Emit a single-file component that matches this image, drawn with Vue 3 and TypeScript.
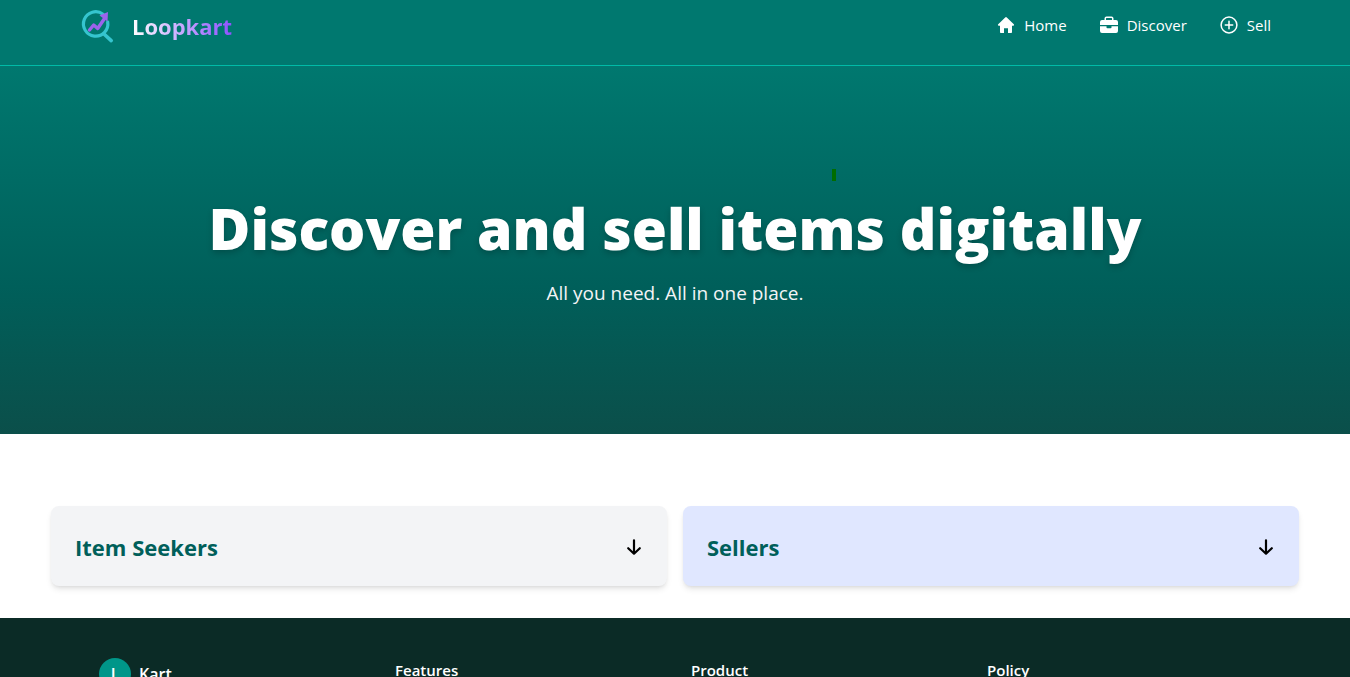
<script setup lang="ts">
interface Panel {
  id: string
  title: string
}

const panels: Panel[] = [
  { id: 'seekers', title: 'Item Seekers' },
  { id: 'sellers', title: 'Sellers' },
]

const footerColumns: string[] = ['Features', 'Product', 'Policy']
</script>

<template>
  <div class="page">
    <header class="header">
      <div class="header-inner">
        <a class="brand" href="#">
          <svg class="brand-mark" viewBox="0 0 36 36" fill="none" aria-hidden="true">
            <path d="M24 6.200A12.200 12.200 0 1 0 28.700 14" stroke="#35c5cf" stroke-width="3.200" stroke-linecap="round" />
            <path d="M25 26 32.200 32.600" stroke="#35c5cf" stroke-width="3.600" stroke-linecap="round" />
            <path d="M10.500 22 14.700 17 18.700 20.500 25.500 10.500" stroke="#9b63ec" stroke-width="3.400" stroke-linejoin="round" stroke-linecap="round" />
            <path d="M20.500 7.500 29 4 28.500 13.500Z" fill="#9b63ec" />
          </svg>
          <span class="brand-name">Loopkart</span>
        </a>
        <nav class="nav" aria-label="Main">
          <a href="#">
            <svg viewBox="0 0 20 20" fill="currentColor" aria-hidden="true">
              <path d="M9.200 2.400a1.200 1.200 0 0 1 1.600 0l7 6.800c.6.6.2 1.500-.6 1.500H16v6.200c0 .7-.4 1.100-1.100 1.100H12v-4.700H8V18H5.100c-.7 0-1.100-.4-1.100-1.100v-6.200H2.800c-.8 0-1.200-.9-.6-1.500z" />
            </svg>
            <span>Home</span>
          </a>
          <a href="#">
            <svg viewBox="0 0 20 20" fill="currentColor" aria-hidden="true">
              <path fill-rule="evenodd" d="M5.500 5V3.500A2 2 0 0 1 7.500 1.500h5a2 2 0 0 1 2 2V5H17a2 2 0 0 1 2 2v3H1V7a2 2 0 0 1 2-2zm1.500 0h6V3.500a.5.5 0 0 0-.5-.5h-5a.5.5 0 0 0-.5.5z" />
              <path d="M1 11.300h6.500v1.200c0 .5.300.8.800.8h3.400c.5 0 .8-.3.800-.8v-1.200H19V16a2 2 0 0 1-2 2H3a2 2 0 0 1-2-2z" />
            </svg>
            <span>Discover</span>
          </a>
          <a href="#">
            <svg viewBox="0 0 20 20" fill="none" stroke="currentColor" stroke-width="1.500" stroke-linecap="round" aria-hidden="true">
              <circle cx="10" cy="10" r="7.900" />
              <path d="M10 6.300v7.400M6.300 10h7.400" />
            </svg>
            <span>Sell</span>
          </a>
        </nav>
      </div>
    </header>

    <main>
      <section class="hero">
        <span class="caret" aria-hidden="true"></span>
        <h1>Discover and sell items digitally</h1>
        <p>All you need. All in one place.</p>
      </section>

      <section class="panels">
        <button v-for="panel in panels" :key="panel.id" type="button" class="panel" :class="panel.id">
          <span class="panel-title">{{ panel.title }}</span>
          <svg viewBox="0 0 20 20" fill="none" stroke="#000" stroke-width="2.200" stroke-linecap="round" stroke-linejoin="round" aria-hidden="true">
            <path d="M10 3.300v13.200M4.200 11.200 10 16.700l5.800-5.500" />
          </svg>
        </button>
      </section>
    </main>

    <footer class="footer">
      <div class="footer-inner">
        <div class="footer-brand">
          <span class="badge">L</span>
          <span>Kart</span>
        </div>
        <h2 v-for="column in footerColumns" :key="column">{{ column }}</h2>
      </div>
    </footer>
  </div>
</template>

<style>
body {
  margin: 0;
  background: #fff;
}
</style>

<style scoped>
.page {
  font-family: "Segoe UI", "Open Sans", "Noto Sans", sans-serif;
  font-size: 16px;
  line-height: 24px;
  color: #fff;
}

.header {
  background: #00786f;
  border-bottom: 1px solid #00bba7;
}

.header-inner {
  box-sizing: border-box;
  max-width: 1192px;
  margin: 0 auto;
  padding: 8px 0 21px;
  display: flex;
  align-items: center;
  justify-content: space-between;
}

.brand {
  display: flex;
  align-items: center;
  gap: 17px;
  text-decoration: none;
}

.brand-mark {
  width: 36px;
  height: 36px;
}

.brand-name {
  font-size: 22px;
  line-height: 32px;
  font-weight: 700;
  color: transparent;
  background: linear-gradient(to right, #fff, #8e51ff);
  background-clip: text;
}

.nav {
  display: flex;
  gap: 32px;
  padding-bottom: 2px;
}

.nav a {
  display: flex;
  align-items: center;
  gap: 8px;
  color: #fff;
  font-size: 15px;
  text-decoration: none;
}

.nav svg {
  width: 20px;
  height: 20px;
}

.hero {
  position: relative;
  display: flex;
  flex-direction: column;
  align-items: center;
  padding: 132px 16px 127px;
  text-align: center;
  background: linear-gradient(to bottom, #00786f, #005f5a 60%, #0b4f4a);
}

.caret {
  position: absolute;
  top: 103px;
  left: calc(50% + 157px);
  width: 4px;
  height: 12px;
  background: #006d00;
}

.hero h1 {
  margin: 0;
  font-size: 57px;
  line-height: 60px;
  font-weight: 800;
  text-shadow: 0 3px 6px rgb(0 0 0 / 0.2);
}

.hero p {
  margin: 21px 0 0;
  font-size: 19px;
  line-height: 28px;
  color: #f3f4f6;
}

.panels {
  box-sizing: border-box;
  max-width: 1280px;
  margin: 0 auto;
  padding: 72px 16px 32px;
  display: grid;
  grid-template-columns: 1fr 1fr;
  gap: 16px;
}

.panel {
  display: flex;
  align-items: center;
  justify-content: space-between;
  padding: 25px 23px 23px 24px;
  border: 0;
  border-radius: 8px;
  font-family: inherit;
  text-align: left;
  cursor: pointer;
  box-shadow: 0 4px 6px -1px rgb(0 0 0 / 0.1), 0 2px 4px -2px rgb(0 0 0 / 0.1);
}

.seekers {
  background: #f3f4f6;
}

.sellers {
  background: #e0e7ff;
}

.panel-title {
  font-size: 22px;
  line-height: 32px;
  font-weight: 700;
  color: #005f5a;
}

.panel svg {
  width: 20px;
  height: 20px;
}

.footer {
  background: #0b2b26;
}

.footer-inner {
  max-width: 1152px;
  margin: 0 auto;
  padding: 40px 16px;
  display: grid;
  grid-template-columns: repeat(4, 1fr);
  gap: 32px;
}

.footer-brand {
  display: flex;
  align-items: center;
  gap: 8px;
  font-weight: 600;
}

.badge {
  width: 32px;
  height: 32px;
  border-radius: 50%;
  background: #009689;
  line-height: 32px;
  text-align: center;
}

.footer h2 {
  margin: 0;
  font-size: 15px;
  line-height: 24px;
  font-weight: 600;
}
</style>
